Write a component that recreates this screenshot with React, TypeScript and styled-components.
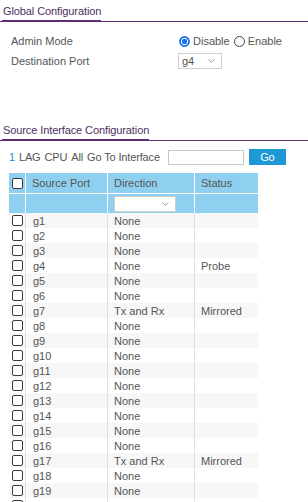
import React from "react";
import styled, { createGlobalStyle } from "styled-components";

const GlobalStyle = createGlobalStyle`
  html, body { margin: 0; padding: 0; background: #fff; }
  body {
    font-family: "Liberation Sans", Arial, sans-serif;
    font-size: 11px;
    color: #555;
  }
`;

const Page = styled.div`
  width: 308px;
  height: 502px;
  overflow: hidden;
`;

const SectionTitle = styled.div<{ $top: number }>`
  margin-top: ${(p) => p.$top}px;
  padding-top: 4px;
  border-bottom: 1px solid #5b2d73;
`;

const TitleText = styled.span`
  display: inline-block;
  margin-left: 2px;
  padding: 0 0 2px 1px;
  line-height: 14px;
  font-size: 11px;
  letter-spacing: -0.1px;
  color: #4e2f63;
  border-bottom: 2px solid #5b2d73;
  margin-bottom: -1px;
`;

const FormBlock = styled.div`
  margin-top: 9px;
  padding-left: 11px;
  display: flex;
  flex-direction: column;
`;

const FormRow = styled.div`
  display: grid;
  grid-template-columns: 167px 1fr;
  align-items: center;
  height: 20px;
`;

const RadioGroup = styled.div`
  display: flex;
  align-items: center;
`;

const RadioLabel = styled.label`
  display: flex;
  align-items: center;
  margin-right: 3px;
  font-size: 11px;
  color: #555;
`;

const Radio = styled.span<{ $checked?: boolean }>`
  width: 11px;
  height: 11px;
  box-sizing: border-box;
  border-radius: 50%;
  margin: 0 3px 0 1px;
  border: 1px solid ${(p) => (p.$checked ? "#1a73e8" : "#444")};
  background: ${(p) =>
    p.$checked
      ? "radial-gradient(circle, #1a73e8 0 2.6px, #fff 3px 3.4px, #1a73e8 3.8px)"
      : "#fff"};
`;

const SelectBox = styled.div<{ $w: number }>`
  width: ${(p) => p.$w}px;
  height: 16px;
  box-sizing: border-box;
  border: 1px solid #cfcfcf;
  background: #fff;
  display: flex;
  align-items: center;
  justify-content: space-between;
  padding: 0 6px 0 3px;
  font-size: 11px;
  color: #555;
`;

const Chevron = () => (
  <svg width="7" height="4" viewBox="0 0 7 4">
    <polyline points="0.5,0.5 3.5,3.2 6.5,0.5" fill="none" stroke="#999" strokeWidth="1" />
  </svg>
);

const FilterBar = styled.div`
  margin-top: 8px;
  padding-left: 9px;
  height: 16px;
  display: flex;
  align-items: center;
  font-size: 11px;
  letter-spacing: -0.15px;
`;

const FilterLink = styled.span<{ $active?: boolean }>`
  color: ${(p) => (p.$active ? "#1a8ccc" : "#555")};
  margin-right: 4px;
`;

const TextInput = styled.div`
  width: 76px;
  height: 15px;
  box-sizing: border-box;
  border: 1px solid #c8c8c8;
  margin-left: 4px;
`;

const GoButton = styled.div`
  width: 37px;
  height: 16px;
  margin-left: 5px;
  background: #1d9ad6;
  color: #fff;
  display: flex;
  align-items: center;
  justify-content: center;
  font-size: 11px;
`;

const Table = styled.div`
  margin: 8px 0 0 9px;
  width: 249px;
`;

const Row = styled.div<{ $kind: "head" | "filter" | "odd" | "even" }>`
  display: grid;
  grid-template-columns: 17px 82px 87px 63px;
  height: ${(p) => (p.$kind === "head" ? 21 : p.$kind === "filter" ? 19 : 15)}px;
  background: ${(p) =>
    p.$kind === "head" || p.$kind === "filter"
      ? "#8fd0f0"
      : p.$kind === "odd"
      ? "#f7f7f7"
      : "#fff"};
  border-bottom: ${(p) => (p.$kind === "head" ? "1px solid #fff" : "none")};
  box-sizing: border-box;
`;

const Cell = styled.div<{ $head?: boolean; $last?: boolean; $pad?: number }>`
  display: flex;
  align-items: center;
  padding-left: ${(p) => p.$pad ?? 6}px;
  border-right: ${(p) => (p.$last ? "none" : p.$head ? "1px solid #fff" : "1px solid #e0e0e0")};
  font-size: 11px;
  color: #555;
  white-space: nowrap;
  overflow: hidden;
`;

const Check = styled.span`
  width: 11px;
  height: 11px;
  box-sizing: border-box;
  border: 1px solid #3a3a3a;
  border-radius: 2px;
  background: #fff;
`;

const rows: [string, string, string][] = Array.from({ length: 19 }, (_, i) => {
  const n = i + 1;
  if (n === 4) return [`g${n}`, "None", "Probe"];
  if (n === 7 || n === 17) return [`g${n}`, "Tx and Rx", "Mirrored"];
  return [`g${n}`, "None", ""];
});

export default function App() {
  return (
    <Page>
      <GlobalStyle />
      <SectionTitle $top={0}>
        <TitleText>Global Configuration</TitleText>
      </SectionTitle>
      <FormBlock>
        <FormRow>
          <span>Admin Mode</span>
          <RadioGroup>
            <RadioLabel>
              <Radio $checked />
              Disable
            </RadioLabel>
            <RadioLabel>
              <Radio />
              Enable
            </RadioLabel>
          </RadioGroup>
        </FormRow>
        <FormRow>
          <span>Destination Port</span>
          <SelectBox $w={44}>
            <span>g4</span>
            <Chevron />
          </SelectBox>
        </FormRow>
      </FormBlock>

      <SectionTitle $top={48}>
        <TitleText>Source Interface Configuration</TitleText>
      </SectionTitle>
      <FilterBar>
        <FilterLink $active>1</FilterLink>
        <FilterLink>LAG</FilterLink>
        <FilterLink>CPU</FilterLink>
        <FilterLink>All</FilterLink>
        <FilterLink>Go To Interface</FilterLink>
        <TextInput />
        <GoButton>Go</GoButton>
      </FilterBar>

      <Table>
        <Row $kind="head">
          <Cell $head $pad={3}>
            <Check />
          </Cell>
          <Cell $head>Source Port</Cell>
          <Cell $head>Direction</Cell>
          <Cell $head $last>Status</Cell>
        </Row>
        <Row $kind="filter">
          <Cell $head />
          <Cell $head />
          <Cell $head>
            <SelectBox $w={62}>
              <span />
              <Chevron />
            </SelectBox>
          </Cell>
          <Cell $head $last />
        </Row>
        {rows.map(([port, dir, status], i) => (
          <Row key={port} $kind={i % 2 === 0 ? "odd" : "even"}>
            <Cell $pad={3}>
              <Check />
            </Cell>
            <Cell $pad={7}>{port}</Cell>
            <Cell>{dir}</Cell>
            <Cell $last>{status}</Cell>
          </Row>
        ))}
        <Row $kind="even">
          <Cell $pad={3}>
            <Check />
          </Cell>
          <Cell $pad={7} />
          <Cell />
          <Cell $last />
        </Row>
      </Table>
    </Page>
  );
}
